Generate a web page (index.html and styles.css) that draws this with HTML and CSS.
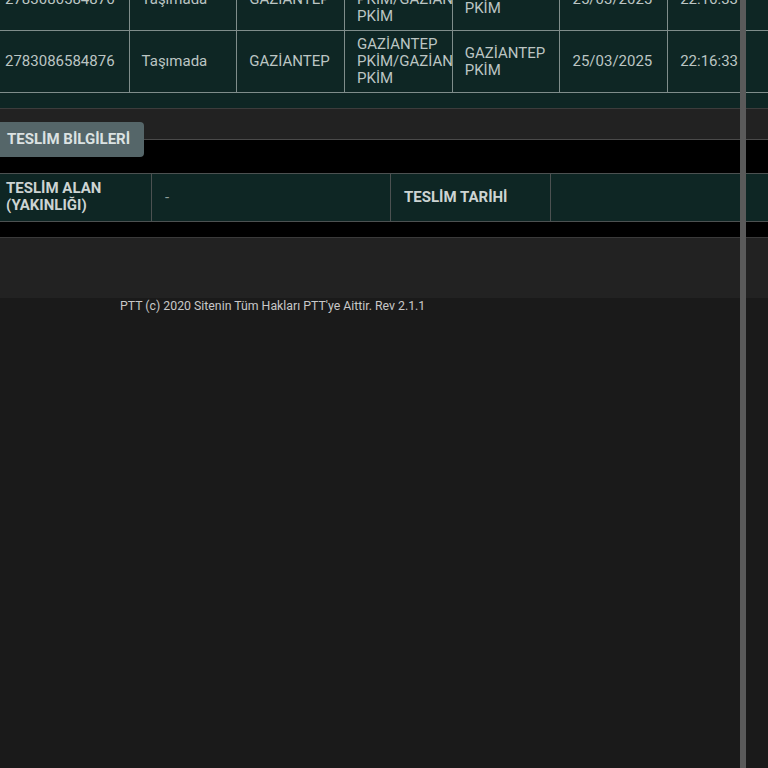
FILE: index.html
```html
<!DOCTYPE html>
<html lang="tr">
<head>
	<meta charset="UTF-8">
	<title>Gönderi Takip</title>
	<link rel="stylesheet" href="styles.css">
</head>
<body>
	<div class="track">
		<table class="moves">
			<tr>
				<td class="c1">2783086584876</td>
				<td>Taşımada</td>
				<td>GAZİANTEP</td>
				<td>GAZİANTEP<br>PKİM/GAZİAN<br>PKİM</td>
				<td>GAZİANTEP<br>PKİM</td>
				<td>25/03/2025</td>
				<td>22:16:33</td>
			</tr>
			<tr>
				<td class="c1">2783086584876</td>
				<td>Taşımada</td>
				<td>GAZİANTEP</td>
				<td>GAZİANTEP<br>PKİM/GAZİAN<br>PKİM</td>
				<td>GAZİANTEP<br>PKİM</td>
				<td>25/03/2025</td>
				<td>22:16:33</td>
			</tr>
		</table>
	</div>
	<div class="section">
		<div class="tabs">
			<span class="tab">TESLİM BİLGİLERİ</span>
		</div>
		<div class="pane">
			<table class="info">
				<tr>
					<th class="i1">TESLİM ALAN<br>(YAKINLIĞI)</th>
					<td class="i2">-</td>
					<th class="i3">TESLİM TARİHİ</th>
					<td class="i4"></td>
				</tr>
			</table>
		</div>
	</div>
	<div class="spacer"></div>
	<footer class="foot">PTT (c) 2020 Sitenin Tüm Hakları PTT'ye Aittir. Rev 2.1.1</footer>
	<div class="scrollbar"></div>
</body>
</html>
```
FILE: styles.css
```css
html, body {
	margin: 0;
	padding: 0;
}
body {
	background: #1a1a1a;
	font-family: Roboto, "Noto Sans", sans-serif;
	min-height: 768px;
	overflow: hidden;
}
table {
	border-collapse: collapse;
	table-layout: fixed;
	width: 784px;
	margin-left: -8px;
}
.track {
	margin-top: -32px;
	background: #0e2624;
	padding-bottom: 15px;
	border-bottom: 1px solid #3c3c3c;
}
.moves td {
	width: 84px;
	height: 51px;
	padding: 5px 0 5px 12px;
	border: 1px solid #7f8d8b;
	font-size: 15px;
	line-height: 17px;
	color: #bcc5c3;
	vertical-align: middle;
	white-space: nowrap;
	overflow: hidden;
}
.moves td.c1 {
	width: 110px;
}
.section {
	background: #000;
}
.tabs {
	height: 30px;
	background: #222;
	border-bottom: 1px solid #4a4a4a;
	display: flex;
	align-items: flex-start;
}
.tab {
	position: relative;
	z-index: 1;
	margin: 13px 0 0 -8px;
	height: 35px;
	line-height: 35px;
	padding: 0 14px 0 15px;
	background: #556669;
	color: #dce2e2;
	font-size: 15px;
	font-weight: 700;
	border-radius: 4px;
}
.pane {
	padding: 33px 0 15px;
	border-bottom: 1px solid #3a3a3a;
}
.info th, .info td {
	height: 34px;
	padding: 6px 0 7px 13px;
	border: 1px solid #4c5151;
	background: #0e2624;
	font-size: 15px;
	line-height: 17px;
	text-align: left;
	vertical-align: middle;
}
.info th {
	color: #cdd4d3;
	font-weight: 700;
}
.info td {
	color: #8f9e9c;
}
.i1 { width: 145px; }
.i2 { width: 225px; }
.i3 { width: 146px; }
.i4 { width: 216px; }
.spacer {
	height: 60px;
	background: #222;
}
.foot {
	padding-left: 120px;
	font-size: 12.3px;
	line-height: 16px;
	color: #c8c8c8;
}
.scrollbar {
	position: fixed;
	top: 0;
	bottom: 0;
	left: 740px;
	width: 6px;
	background: #5a5a5a;
}
```
